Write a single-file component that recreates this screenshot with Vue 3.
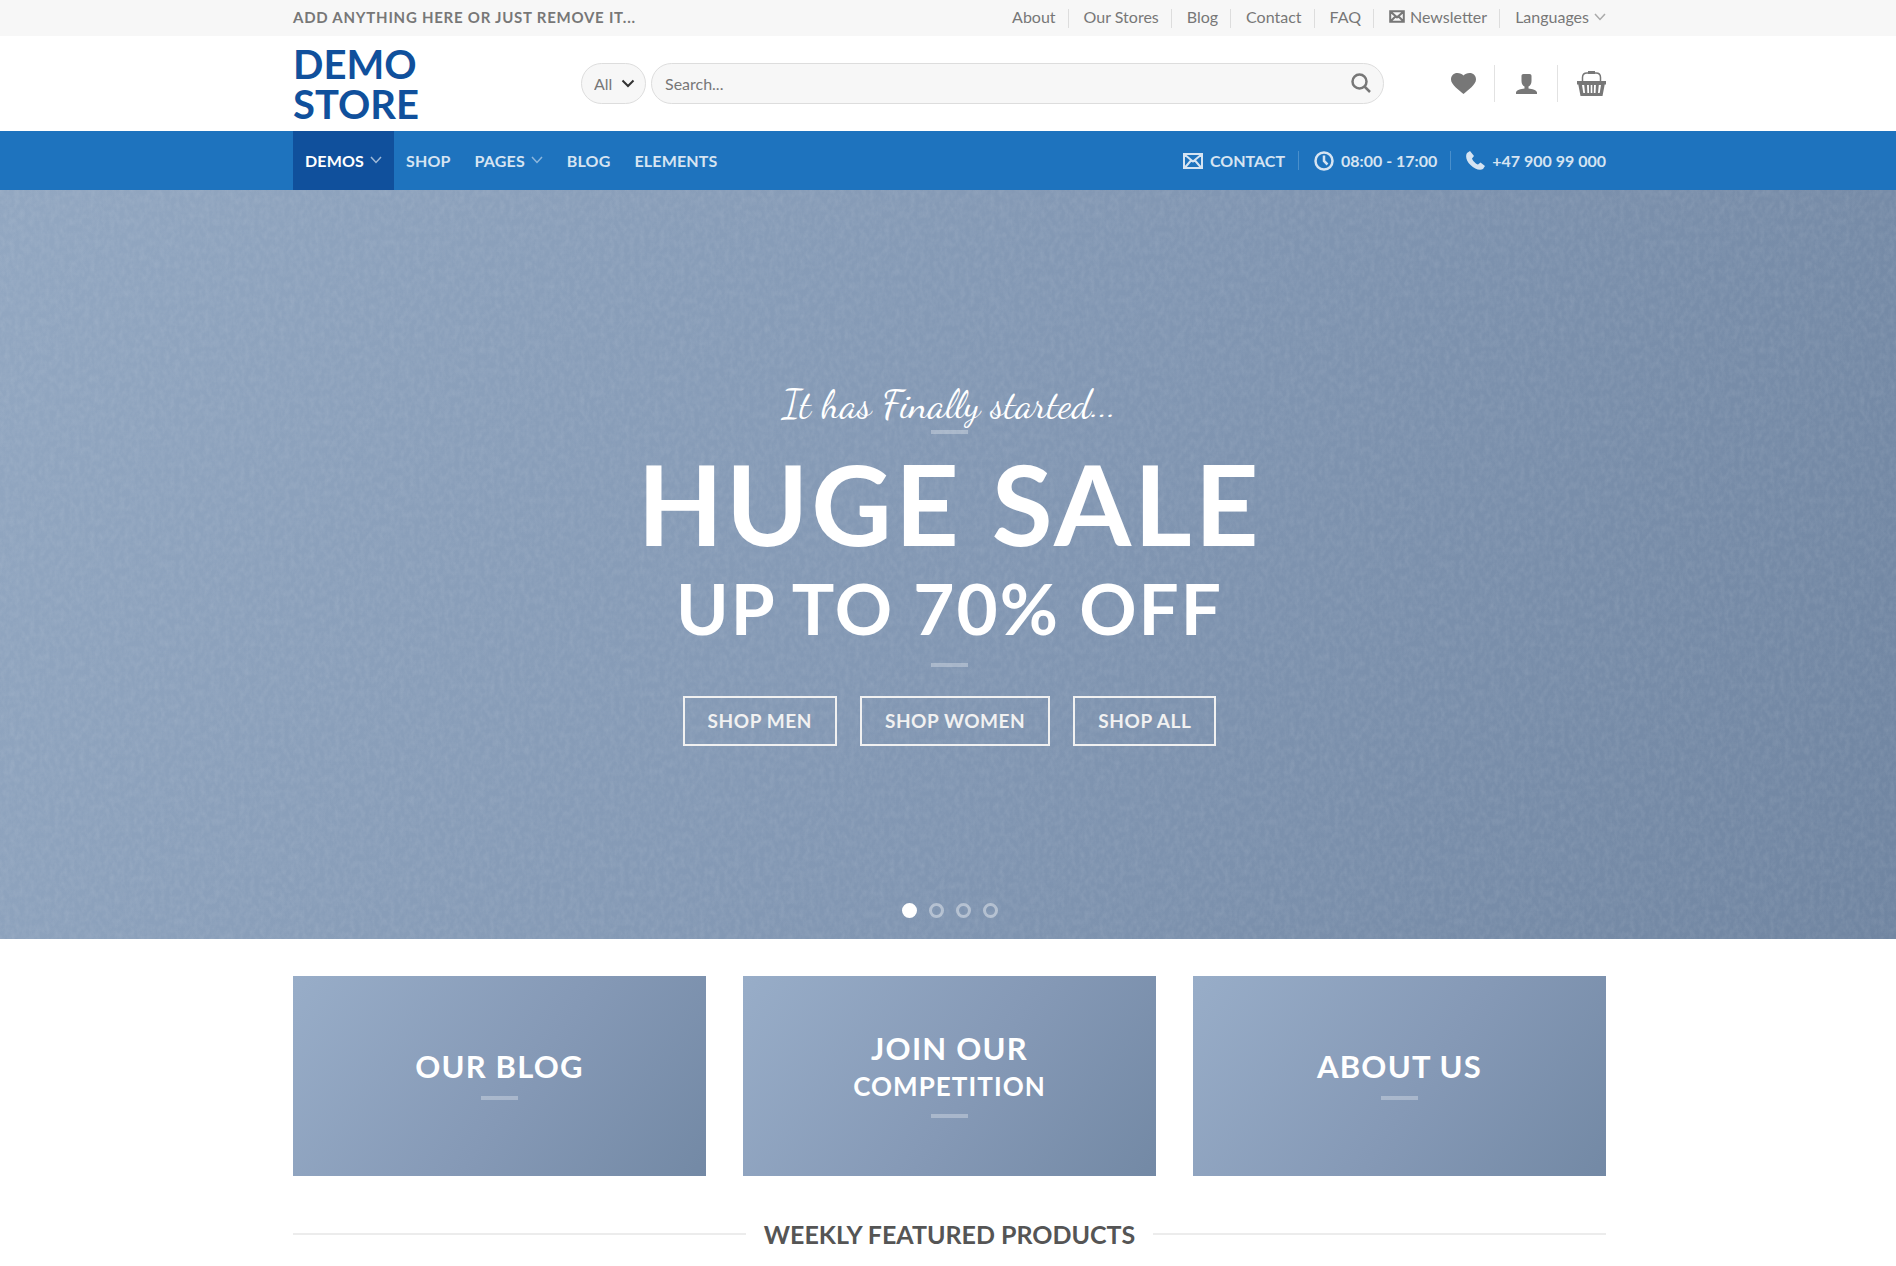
<template>
  <div class="page">
    <header>
      <div class="top-bar">
        <div class="container top-bar-inner">
          <strong class="top-note">Add anything here or just remove it...</strong>
          <nav class="top-nav" aria-label="Secondary">
            <a v-for="link in topLinks" :key="link" href="#">{{ link }}</a>
            <a href="#">
              <svg class="mail-small" viewBox="0 0 20 16">
                <path d="M1.5 1.5h17v13h-17zM2 2l8 7 8-7M2 14l6-6M18 14l-6-6" />
              </svg>
              Newsletter
            </a>
            <a href="#">
              Languages
              <svg class="chevron" viewBox="0 0 12 8"><path d="M1 1l5 5.500 5-5.500" /></svg>
            </a>
          </nav>
        </div>
      </div>

      <div class="container masthead">
        <a class="logo" href="#">Demo Store</a>
        <form class="search" role="search" @submit.prevent>
          <div class="category">
            <select v-model="category" aria-label="Category">
              <option>All</option>
              <option>Men</option>
              <option>Women</option>
            </select>
            <svg viewBox="0 0 14 9"><path d="M1.500 1.500l5.500 5.500 5.500-5.500" /></svg>
          </div>
          <div class="search-field">
            <input v-model="query" type="search" placeholder="Search..." aria-label="Search" />
            <button type="submit" aria-label="Submit search">
              <svg viewBox="0 0 20 20">
                <circle cx="8.500" cy="8.500" r="7" />
                <path d="M13.500 13.500l5.500 5.500" />
              </svg>
            </button>
          </div>
        </form>
        <div class="account">
          <a href="#" aria-label="Wishlist">
            <svg class="heart" viewBox="0 0 25 21">
              <path
                d="M12.500 21C8 17 0 11.500 0 6.500 0 2.500 2.800 0 6.300 0c2.600 0 4.900 1 6.200 2.600C13.800 1 16.100 0 18.700 0 22.200 0 25 2.500 25 6.500 25 11.500 17 17 12.500 21z"
              />
            </svg>
          </a>
          <a href="#" aria-label="Account">
            <svg class="user" viewBox="0 0 21 20">
              <path
                d="M7.500 0h6c1.300 0 2 .8 2 2v5c0 2.800-1.300 4.600-3 5.500v2c3.500.5 8.500 1.500 8.500 4V20H0v-1.500c0-2.500 5-3.500 8.500-4v-2c-1.700-.9-3-2.700-3-5.500V2c0-1.200.7-2 2-2z"
              />
            </svg>
          </a>
          <a href="#" aria-label="Cart">
            <svg class="basket" viewBox="0 0 29 25">
              <path class="handle" d="M5.500 11V6.500Q5.500 2 10 2h9q4.500 0 4.500 4.500V11" />
              <path d="M11 0h7v3h-7z" />
              <path
                fill-rule="evenodd"
                d="M0 10h29v3.500h-1.300L25.500 25h-22L1.300 13.500H0zM5 14l1.300 8H8l-.8-8zM10 14l.4 8h1.700l-.2-8zM13.700 14v8h1.600v-8zM17 14l-.2 8h1.700l.4-8zM21.800 14l-.8 8h1.700l1.300-8z"
              />
            </svg>
          </a>
        </div>
      </div>

      <div class="main-bar">
        <div class="container main-bar-inner">
          <nav class="main-nav" aria-label="Main">
            <a
              v-for="item in mainLinks"
              :key="item.label"
              href="#"
              :class="{ active: item.active }"
            >
              {{ item.label }}
              <svg v-if="item.menu" class="chevron" viewBox="0 0 12 8">
                <path d="M1 1l5 5.500 5-5.500" />
              </svg>
            </a>
          </nav>
          <div class="contact">
            <a href="#">
              <svg class="mail" viewBox="0 0 20 16">
                <path d="M1 1h18v14H1zM1.500 1.500l8.500 7 8.500-7M2 14.500l6-7M18 14.500l-6-7" />
              </svg>
              CONTACT
            </a>
            <a href="#">
              <svg class="clock" viewBox="0 0 20 20">
                <circle cx="10" cy="10" r="8.500" />
                <path d="M10 4.500V10l3.500 3.500" />
              </svg>
              08:00 - 17:00
            </a>
            <a href="#">
              <svg class="phone" viewBox="0 0 19 19">
                <path
                  d="M4 0L1 2C-1 5 .5 10 4.500 14S14 20 17 18l2-3-4.500-3.500-2.500 2c-2-.5-5.500-4-6-6L8 5z"
                />
              </svg>
              +47 900 99 000
            </a>
          </div>
        </div>
      </div>
    </header>

    <main>
      <section class="hero">
        <svg class="fabric" aria-hidden="true">
          <filter id="weave">
            <feTurbulence type="fractalNoise" baseFrequency="0.2 0.14" numOctaves="3" seed="4" />
            <feColorMatrix values="0 0 0 0 1  0 0 0 0 1  0 0 0 0 1  0.6 0 0 0 -0.2" />
          </filter>
          <rect width="100%" height="100%" filter="url(#weave)" />
        </svg>
        <p class="script">It has Finally started...</p>
        <span class="divider"></span>
        <h1>Huge Sale</h1>
        <h2>Up to 70% Off</h2>
        <span class="divider lower"></span>
        <div class="hero-actions">
          <button v-for="label in shops" :key="label" type="button">{{ label }}</button>
        </div>
        <div class="dots">
          <button
            v-for="n in 4"
            :key="n"
            type="button"
            :class="{ current: slide === n }"
            :aria-label="'Slide ' + n"
            @click="slide = n"
          ></button>
        </div>
      </section>

      <section class="container banners">
        <a v-for="banner in banners" :key="banner.title" class="banner" href="#">
          <span class="banner-title">{{ banner.title }}</span>
          <span v-if="banner.sub" class="banner-sub">{{ banner.sub }}</span>
          <span class="divider"></span>
        </a>
      </section>

      <div class="container">
        <h3 class="section-title">Weekly Featured Products</h3>
      </div>
    </main>
  </div>
</template>

<script setup>
import { ref } from 'vue'

const category = ref('All')
const query = ref('')
const slide = ref(1)

const topLinks = ['About', 'Our Stores', 'Blog', 'Contact', 'FAQ']
const mainLinks = [
  { label: 'Demos', menu: true, active: true },
  { label: 'Shop' },
  { label: 'Pages', menu: true },
  { label: 'Blog' },
  { label: 'Elements' }
]
const shops = ['Shop Men', 'Shop Women', 'Shop All']
const banners = [
  { title: 'Our Blog' },
  { title: 'Join Our', sub: 'Competition' },
  { title: 'About Us' }
]
</script>

<style>
body {
  margin: 0;
  background: #fff;
}
</style>

<style scoped>
.page {
  font-family: Lato, sans-serif;
  font-size: 16px;
  color: #777;
  overflow: hidden;
}
* {
  box-sizing: border-box;
}
a {
  color: inherit;
  text-decoration: none;
}
button,
input,
select {
  font: inherit;
}
svg {
  fill: currentColor;
  flex: none;
}
.container {
  width: 100%;
  max-width: 1352px;
  margin: 0 auto;
  padding: 0 18px 0 21px;
}

/* top bar */
.top-bar {
  background: #f7f7f7;
}
.top-bar-inner {
  display: flex;
  align-items: center;
  justify-content: space-between;
  height: 36px;
}
.top-note {
  padding-bottom: 2px;
  font-size: 15px;
  letter-spacing: 0.05em;
  text-transform: uppercase;
}
.top-nav,
.account,
.contact {
  display: flex;
  align-items: center;
}
.top-nav a {
  display: flex;
  align-items: center;
  gap: 5px;
  height: 19px;
  line-height: 16px;
  padding: 0 12px 3px 15px;
  border-left: 1px solid #ddd;
}
.top-nav a:first-child {
  border-left: 0;
}
.top-nav a:last-child {
  padding-right: 0;
}
.chevron {
  width: 12px;
  height: 8px;
  opacity: 0.6;
}
.chevron path,
.category path,
.search-field path,
.search-field circle,
.mail path,
.mail-small path,
.clock path,
.clock circle,
.handle {
  fill: none;
  stroke: currentColor;
}
.chevron path {
  stroke-width: 1.5;
}
.mail-small {
  width: 16px;
  height: 13px;
}
.mail-small path {
  stroke-width: 2.5;
}

/* logo, search, account */
.masthead {
  display: flex;
  align-items: center;
  height: 95px;
}
.logo {
  width: 130px;
  margin-right: 158px;
  font-size: 40px;
  line-height: 40px;
  font-weight: 700;
  color: #10509c;
  text-transform: uppercase;
}
.search {
  display: flex;
  flex: 1;
  gap: 5px;
}
.category {
  position: relative;
}
.category select {
  width: 65px;
  height: 41px;
  padding: 0 12px;
  border: 1px solid #ddd;
  border-radius: 21px;
  background: #f7f7f7;
  color: #777;
  appearance: none;
}
.category svg {
  position: absolute;
  right: 11px;
  top: 16px;
  width: 14px;
  height: 9px;
  color: #333;
  pointer-events: none;
}
.category path {
  stroke-width: 2;
}
.search-field {
  display: flex;
  flex: 1;
  align-items: center;
  height: 41px;
  padding: 0 12px 0 13px;
  border: 1px solid #ddd;
  border-radius: 21px;
  background: #f7f7f7;
}
.search-field input {
  flex: 1;
  min-width: 0;
  padding: 0;
  border: 0;
  outline: 0;
  background: none;
  color: #777;
}
.search-field input::placeholder {
  color: #777;
}
.search-field button {
  display: flex;
  padding: 0 0 2px;
  border: 0;
  background: none;
  color: #777;
}
.search-field svg {
  width: 20px;
  height: 20px;
}
.search-field path,
.search-field circle {
  stroke-width: 2.5;
}
.account {
  margin-left: 46px;
}
.account a {
  display: flex;
  align-items: center;
  height: 37px;
  padding: 0 20px 0 21px;
  border-left: 1px solid #e2e2e2;
}
.account a:first-child {
  border-left: 0;
  padding-right: 18px;
}
.account a:last-child {
  padding: 0 0 0 19px;
}
.heart {
  width: 25px;
  height: 21px;
}
.user {
  width: 21px;
  height: 20px;
}
.basket {
  width: 29px;
  height: 25px;
}
.basket .handle {
  stroke-width: 1.5;
}

/* main navigation */
.main-bar {
  background: #1e73be;
}
.main-bar-inner {
  display: flex;
  justify-content: space-between;
  height: 59px;
}
.main-nav {
  display: flex;
}
.main-nav a {
  display: flex;
  align-items: center;
  gap: 6px;
  padding: 0 12px 1px;
  font-weight: 700;
  letter-spacing: 0.01em;
  color: #d6e4f2;
  text-transform: uppercase;
}
.main-nav a.active {
  background: #10509c;
  color: #fff;
}
.contact a {
  display: flex;
  align-items: center;
  gap: 7px;
  height: 19px;
  padding: 0 13px 0 15px;
  border-left: 1px solid #4a8fcb;
  color: #d6e4f2;
  font-weight: 700;
}
.contact a:first-child {
  border-left: 0;
}
.contact a:last-child {
  padding-right: 0;
}
.mail {
  width: 20px;
  height: 16px;
}
.mail path {
  stroke-width: 2;
}
.clock {
  width: 20px;
  height: 20px;
}
.clock path,
.clock circle {
  stroke-width: 2.5;
}
.phone {
  width: 19px;
  height: 19px;
}

/* hero slide */
.hero {
  position: relative;
  display: flex;
  flex-direction: column;
  align-items: center;
  justify-content: center;
  min-height: 749px;
  padding-left: 3px;
  background: linear-gradient(115deg, #92a7c1 0%, #8196b2 55%, #7085a1 100%);
  color: #fff;
  text-align: center;
}
.fabric {
  position: absolute;
  inset: 0;
  width: 100%;
  height: 100%;
  opacity: 0.25;
}
.hero > :not(.fabric) {
  z-index: 1;
}
.script {
  margin: 0;
  padding-bottom: 4px;
  font-family: 'Dancing Script', cursive;
  font-size: 40px;
  line-height: 43px;
}
.divider {
  display: block;
  width: 37px;
  height: 4px;
  background: rgba(255, 255, 255, 0.3);
}
.divider.lower {
  margin: 20px 0 29px;
}
.hero h1,
.hero h2 {
  margin: 19px 0 0;
  font-weight: 700;
  text-transform: uppercase;
}
.hero h1 {
  font-size: 111px;
  line-height: 100px;
  letter-spacing: 3px;
}
.hero h2 {
  font-size: 71px;
  line-height: 71px;
  letter-spacing: 2px;
}
.hero-actions {
  display: flex;
  gap: 23px;
}
.hero-actions button {
  height: 50px;
  padding: 0 23px 2px;
  border: 2px solid #f1f1f1;
  background: none;
  color: #f1f1f1;
  font-size: 19px;
  font-weight: 700;
  letter-spacing: 0.03em;
  text-transform: uppercase;
}
.dots {
  position: absolute;
  left: 3px;
  right: 0;
  bottom: 21px;
  display: flex;
  justify-content: center;
  gap: 12px;
}
.dots button {
  width: 15px;
  height: 15px;
  padding: 0;
  border: 3px solid #fff;
  border-radius: 50%;
  background: none;
  opacity: 0.4;
}
.dots .current {
  background: #fff;
  opacity: 1;
}

/* banners */
.banners {
  display: grid;
  grid-template-columns: repeat(3, 1fr);
  gap: 37px;
  padding-top: 37px;
}
.banner {
  display: flex;
  flex-direction: column;
  align-items: center;
  justify-content: center;
  height: 200px;
  padding-bottom: 6px;
  background: linear-gradient(125deg, #98adc8 0%, #8599b6 55%, #7389a5 100%);
  color: #fff;
  font-weight: 700;
  text-transform: uppercase;
}
.banner-title,
.banner-sub {
  letter-spacing: 0.04em;
}
.banner-title {
  font-size: 31px;
  line-height: 40px;
}
.banner-sub {
  font-size: 26px;
  line-height: 36px;
}
.banner .divider {
  margin-top: 10px;
}

.section-title {
  display: flex;
  align-items: center;
  gap: 18px;
  margin: 43px 0 0;
  font-size: 25px;
  line-height: 30px;
  font-weight: 700;
  color: #555;
  text-transform: uppercase;
}
.section-title::before,
.section-title::after {
  content: '';
  flex: 1;
  height: 2px;
  background: #ececec;
}
</style>
